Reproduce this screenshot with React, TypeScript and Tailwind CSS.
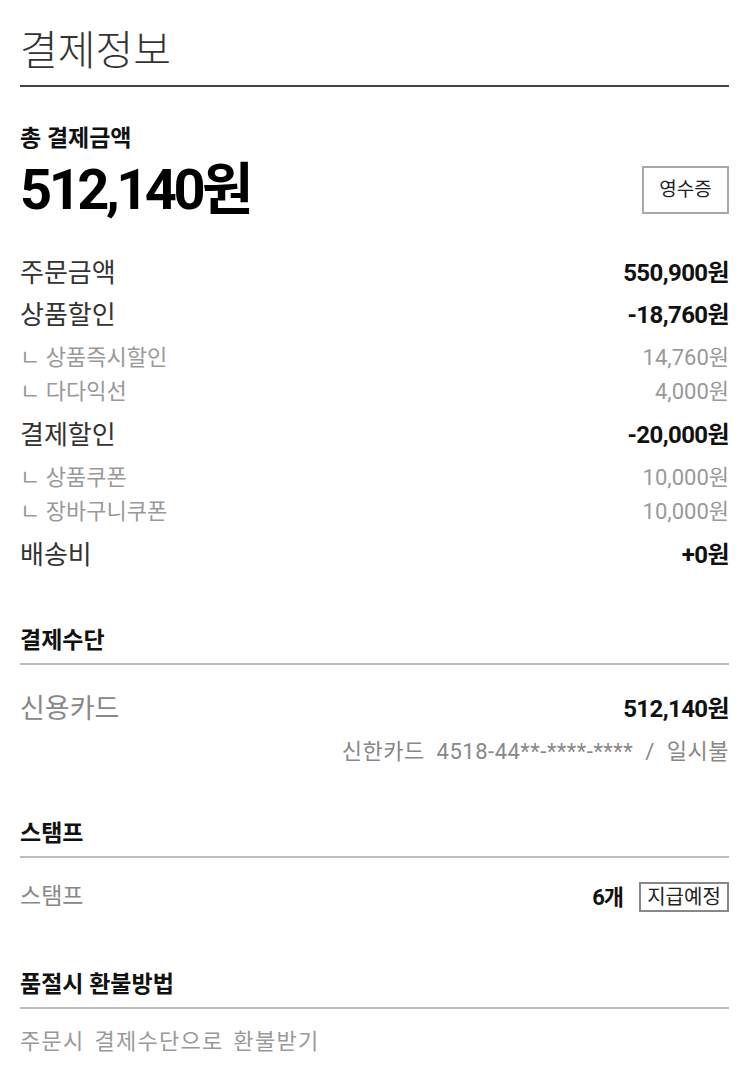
import React from 'react'

// 결제정보 화면
const FONT = "font-['Roboto','Noto_Sans_CJK_KR',sans-serif]"

type Line = { label: string; value: string; subs?: { label: string; value: string }[] }

const lines: Line[] = [
  { label: '주문금액', value: '550,900원' },
  {
    label: '상품할인',
    value: '-18,760원',
    subs: [
      { label: '상품즉시할인', value: '14,760원' },
      { label: '다다익선', value: '4,000원' },
    ],
  },
  {
    label: '결제할인',
    value: '-20,000원',
    subs: [
      { label: '상품쿠폰', value: '10,000원' },
      { label: '장바구니쿠폰', value: '10,000원' },
    ],
  },
  { label: '배송비', value: '+0원' },
]

function SectionTitle({ children, className }: { children: React.ReactNode; className?: string }) {
  return (
    <div className={`border-b-2 border-[#bdbdbd] pb-[8px] ${className ?? ''}`}>
      <h3 className="text-[23px] leading-[28px] font-bold text-[#111]">{children}</h3>
    </div>
  )
}

export default function App() {
  return (
    <div className={`${FONT} bg-white min-h-[1085px] w-[750px] pl-5 pr-[21px] text-[#333]`}>
      {/* 제목 */}
      <div className="pt-[26px] pb-[9px] border-b-2 border-[#444]">
        <h1 className="text-[41px] leading-[50px] font-light text-[#333]">결제정보</h1>
      </div>

      {/* 총 결제금액 */}
      <p className="mt-[38px] text-[23px] leading-[28px] font-bold text-[#111]">총 결제금액</p>
      <div className="mt-[13px] flex items-center justify-between h-[48px]">
        <span className="text-[56px] leading-[48px] font-bold tracking-[-3.5px] text-black">512,140원</span>
        <button className="w-[87px] h-[48px] border-2 border-[#a8a8a8] text-[19px] text-[#222] bg-white">
          영수증
        </button>
      </div>

      {/* 금액 상세 */}
      <div className="mt-[38px]">
        {lines.map((l) => (
          <div key={l.label}>
            <div className="flex justify-between items-center h-[42px]">
              <span className="text-[26px] leading-[42px] text-[#333]">{l.label}</span>
              <span className="text-[24px] leading-[42px] font-bold tracking-[-0.6px] text-[#111]">{l.value}</span>
            </div>
            {l.subs && (
              <div className="py-[5px]">
                {l.subs.map((s) => (
                  <div key={s.label} className="flex justify-between items-center h-[34px] text-[22px] leading-[34px] text-[#999]">
                    <span>ㄴ {s.label}</span>
                    <span>{s.value}</span>
                  </div>
                ))}
              </div>
            )}
          </div>
        ))}
      </div>

      {/* 결제수단 */}
      <SectionTitle className="mt-[51px]">결제수단</SectionTitle>
      <div className="mt-[27px] flex justify-between items-center h-[34px]">
        <span className="text-[27px] leading-[34px] text-[#888]">신용카드</span>
        <span className="text-[24px] leading-[34px] font-bold tracking-[-0.6px] text-[#111]">512,140원</span>
      </div>
      <p className="mt-[12px] text-right text-[22px] leading-[28px] tracking-[0.5px] [word-spacing:6px] text-[#888]">
        신한카드 4518-44**-****-**** / 일시불
      </p>

      {/* 스탬프 */}
      <SectionTitle className="mt-[54px]">스탬프</SectionTitle>
      <div className="mt-[24px] flex justify-between items-center h-[30px]">
        <span className="text-[23px] leading-[30px] text-[#888]">스탬프</span>
        <div className="flex items-center gap-[16px]">
          <span className="text-[22px] font-bold tracking-[-1px] text-[#111]">6개</span>
          <span className="h-[30px] w-[90px] border-2 border-[#888] text-[20px] leading-[26px] text-center text-[#222]">
            지급예정
          </span>
        </div>
      </div>

      {/* 품절시 환불방법 */}
      <SectionTitle className="mt-[59px]">품절시 환불방법</SectionTitle>
      <p className="mt-[19px] text-[22px] leading-[28px] tracking-[1.3px] [word-spacing:3px] text-[#999]">
        주문시 결제수단으로 환불받기
      </p>
    </div>
  )
}
